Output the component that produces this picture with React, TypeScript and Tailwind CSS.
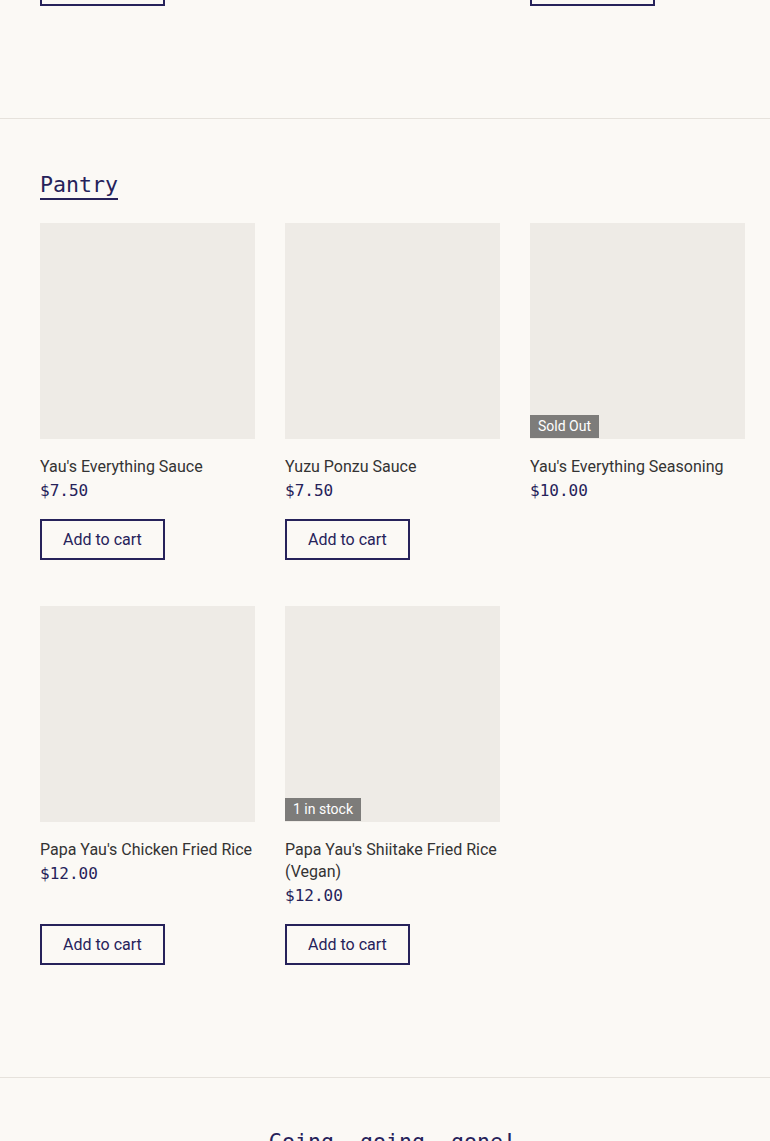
import React from 'react';

type Product = {
  name: string;
  price: string;
  badge?: string;
  soldOut?: boolean;
};

const pantry: Product[] = [
  { name: "Yau's Everything Sauce", price: '$7.50' },
  { name: 'Yuzu Ponzu Sauce', price: '$7.50' },
  { name: "Yau's Everything Seasoning", price: '$10.00', badge: 'Sold Out', soldOut: true },
  { name: "Papa Yau's Chicken Fried Rice", price: '$12.00' },
  { name: "Papa Yau's Shiitake Fried Rice (Vegan)", price: '$12.00', badge: '1 in stock' },
];

const mono = "font-['DejaVu_Sans_Mono','Liberation_Mono',monospace]";

const CartButton = () => (
  <button className="self-start border-2 border-[#26225a] px-[21px] py-[8px] text-[16px] leading-[21px] text-[#26225a]">
    Add to cart
  </button>
);

const ProductCard = ({ product }: { product: Product }) => (
  <div className="flex flex-col">
    <div className="relative h-[216px] w-full bg-[#eeebe6]">
      {product.badge && (
        <span className="absolute bottom-[1px] left-0 bg-[#7d7c7a] px-[8px] text-[14px] leading-[23px] text-white">
          {product.badge}
        </span>
      )}
    </div>
    <h3 className="mt-[17px] text-[16px] leading-[22px] text-[#333333]">{product.name}</h3>
    <p className={`${mono} pt-[1px] text-[16px] leading-[24px] text-[#26225a]`}>{product.price}</p>
    {!product.soldOut && (
      <div className="mt-auto pt-[16px]">
        <CartButton />
      </div>
    )}
  </div>
);

export default function App() {
  return (
    <div className="min-h-screen overflow-hidden bg-[#fbf9f5] font-['Roboto','Liberation_Sans',sans-serif]">
      {/* tail of the previous section */}
      <section className="-mt-[35px] pb-[112px] pl-[40px] pr-[25px]">
        <div className="grid grid-cols-[215px_215px_215px] gap-x-[30px]">
          <div>
            <CartButton />
          </div>
          <div />
          <div>
            <CartButton />
          </div>
        </div>
      </section>

      <section className="border-t border-[#e6e2dc] pb-[112px] pl-[40px] pr-[25px] pt-[53px]">
        <h2
          className={`${mono} mb-[23px] inline-block border-b-2 border-[#26225a] text-[21.6px] leading-[26px] text-[#26225a]`}
        >
          Pantry
        </h2>
        <div className="grid grid-cols-[215px_215px_215px] gap-x-[30px] gap-y-[46px]">
          {pantry.map((p) => (
            <ProductCard key={p.name} product={p} />
          ))}
        </div>
      </section>

      <section className="border-t border-[#e6e2dc] pl-[40px] pr-[25px] pt-[51px] text-center">
        <h2 className={`${mono} text-[21.6px] leading-[26px] text-[#26225a]`}>Going, going, gone!</h2>
      </section>
    </div>
  );
}
